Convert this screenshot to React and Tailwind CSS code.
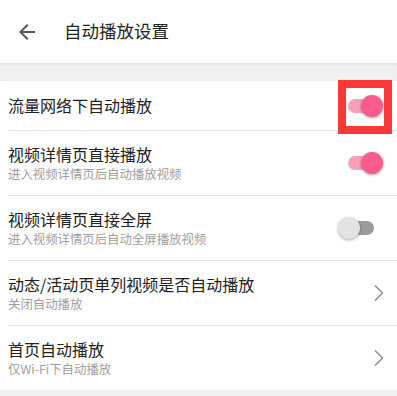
import React from "react";

const font = { fontFamily: '"Noto Sans CJK SC", "Noto Sans", sans-serif' };

function Toggle({ on }) {
  return (
    <div className="relative w-[45px] h-[22px] shrink-0">
      <div
        className={
          "absolute top-[4px] h-[14px] w-[33px] rounded-full " +
          (on ? "right-[2px] bg-[#f7a1b9]" : "left-[3px] bg-[#9c9c9c]")
        }
      />
      <div
        className={
          "absolute top-0 h-[22px] w-[22px] rounded-full shadow-[0_1px_3px_rgba(0,0,0,0.35)] " +
          (on ? "right-0 bg-[#fb5c8c]" : "left-0 bg-[#e3e3e3]")
        }
      />
    </div>
  );
}

function Chevron() {
  return (
    <svg width="12" height="18" viewBox="0 0 12 18" className="shrink-0 mr-[12px]">
      <path d="M2 1.5 L9.5 9 L2 16.5" fill="none" stroke="#8a8a8a" strokeWidth="1.4" />
    </svg>
  );
}

function Row({ title, sub, right, last, h, annotate }) {
  return (
    <div className="pl-[8px]">
      <div
        className={
          "flex items-center justify-between " +
          (last ? "" : "border-b border-[#e6e6e6]")
        }
        style={{ height: h }}
      >
        <div className="flex flex-col">
          <div className="text-[16px] leading-[19px] text-[#212121]">{title}</div>
          {sub && (
            <div className="text-[12.4px] leading-[15px] text-[#9e9e9e] mt-[3px]">{sub}</div>
          )}
        </div>
        {right === "on" || right === "off" ? (
          <div className="relative mr-[14px]">
            <Toggle on={right === "on"} />
            {annotate && (
              <div className="absolute left-0 top-[-15px] w-[54px] h-[54px] border-[8px] border-[#fa3838]" />
            )}
          </div>
        ) : (
          <Chevron />
        )}
      </div>
    </div>
  );
}

export default function App() {
  return (
    <div className="w-[397px] h-[396px] bg-[#f0f0f0] overflow-hidden" style={font}>
      <div className="h-[63px] bg-white flex items-center">
        <svg width="24" height="24" viewBox="0 0 24 24" className="ml-[15px]">
          <path
            d="M20 11H7.83l5.59-5.59L12 4l-8 8 8 8 1.41-1.41L7.83 13H20v-2z"
            fill="#555"
          />
        </svg>
        <div className="ml-[25px] text-[17.5px] text-[#222]">自动播放设置</div>
      </div>
      <div className="h-[18px] bg-[#f0f0f0] shadow-[inset_0_2px_2px_rgba(0,0,0,0.05)]" />
      <div className="bg-white">
        <Row title="流量网络下自动播放" right="on" h={50} annotate />
        <Row title="视频详情页直接播放" sub="进入视频详情页后自动播放视频" right="on" h={65} />
        <Row title="视频详情页直接全屏" sub="进入视频详情页后自动全屏播放视频" right="off" h={65} />
        <Row title="动态/活动页单列视频是否自动播放" sub="关闭自动播放" right="chev" h={65} />
        <Row title="首页自动播放" sub="仅Wi-Fi下自动播放" right="chev" h={64} last />
      </div>
    </div>
  );
}
